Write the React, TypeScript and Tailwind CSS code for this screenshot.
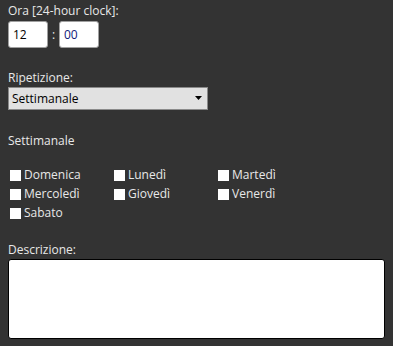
import { useState } from "react";

const DAYS = ["Domenica", "Lunedì", "Martedì", "Mercoledì", "Giovedì", "Venerdì", "Sabato"];

export default function App() {
  const [hour, setHour] = useState("12");
  const [minute, setMinute] = useState("00");
  const [checked, setChecked] = useState<Record<string, boolean>>({});

  return (
    <div className="min-h-[346px] w-[393px] bg-[#333333] px-2 pt-[3px] text-[12px] text-[#e8e8e8] font-['Open_Sans',sans-serif]">
      {/* Time */}
      <div className="leading-[16px]">Ora [24-hour clock]:</div>
      <div className="mt-[2px] flex items-center">
        <input
          value={hour}
          onChange={(e) => setHour(e.target.value)}
          className="h-[27px] w-[40px] rounded-[3px] border border-[#a0a0a0] bg-white px-[4px] text-[12px] text-black outline-none"
        />
        <span className="w-[11px] text-center">:</span>
        <input
          value={minute}
          onChange={(e) => setMinute(e.target.value)}
          className="h-[27px] w-[40px] rounded-[3px] border border-[#a0a0a0] bg-white px-[4px] text-[12px] text-[#10207a] outline-none"
        />
      </div>

      {/* Repeat */}
      <div className="mt-[22px] leading-[16px]">Ripetizione:</div>
      <div className="relative mt-[1px] h-[23px] w-[200px] border border-[#8a8a8a] bg-[#e1e1e1] text-black">
        <span className="absolute left-[3px] top-[3px] leading-[16px]">Settimanale</span>
        <svg className="absolute right-[5px] top-[8px]" width="7" height="4" viewBox="0 0 7 4">
          <path d="M0 0h7L3.5 4z" fill="#000" />
        </svg>
      </div>

      {/* Weekly */}
      <div className="mt-[23px] leading-[16px]">Settimanale</div>
      <div className="mt-[18px] grid grid-cols-[104px_104px_104px] gap-y-[3px] pl-[2px]">
        {DAYS.map((d) => (
          <label key={d} className="flex h-[16px] items-center">
            <button
              onClick={() => setChecked({ ...checked, [d]: !checked[d] })}
              className="mr-[3px] h-[11px] w-[11px] bg-white"
            />
            <span className="leading-[16px]">{d}</span>
          </label>
        ))}
      </div>

      {/* Description */}
      <div className="mt-[21px] leading-[16px]">Descrizione:</div>
      <textarea className="mt-[1px] block h-[80px] w-[377px] resize-none rounded-[3px] border border-black bg-white text-black outline-none" />
    </div>
  );
}
